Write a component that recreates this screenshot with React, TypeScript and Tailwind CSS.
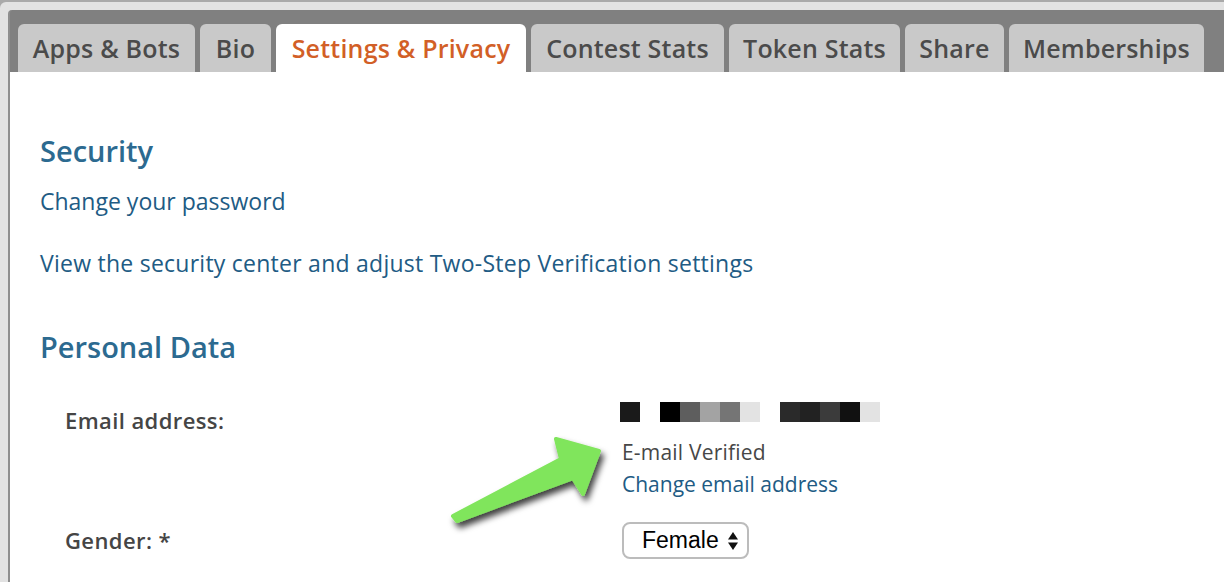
import React from "react"

const tabs = [
    { label: "Apps & Bots", w: "w-[177px]" },
    { label: "Bio", w: "w-[71px]" },
    { label: "Settings & Privacy", w: "w-[250px]", active: true },
    { label: "Contest Stats", w: "w-[193px]" },
    { label: "Token Stats", w: "w-[171px]" },
    { label: "Share", w: "w-[99px]" },
    { label: "Memberships", w: "w-[195px]" },
]

const pixelGroups = [
    ["bg-[#1a1a1a]"],
    ["bg-[#000000]", "bg-[#5e5e5e]", "bg-[#a3a3a3]", "bg-[#757575]", "bg-[#e3e3e3]"],
    ["bg-[#2a2a2a]", "bg-[#222222]", "bg-[#3b3b3b]", "bg-[#111111]", "bg-[#e3e3e3]"],
]

function Arrow() {
    return (
        <svg className="absolute left-0 top-0 pointer-events-none" width="1224" height="582" viewBox="0 0 1224 582">
            <defs>
                <filter id="arrowShadow" x="-20%" y="-20%" width="140%" height="150%">
                    <feDropShadow dx="3" dy="5" stdDeviation="3" floodColor="#000" floodOpacity="0.75" />
                </filter>
            </defs>
            <polygon
                points="453,516 561,459 556,439 599,451 583,494 573,478 457,521"
                fill="#80e55c"
                stroke="#80e55c"
                strokeWidth="4"
                strokeLinejoin="round"
                filter="url(#arrowShadow)"
            />
        </svg>
    )
}

function App() {
    return (
        <div className="relative w-[1224px] h-[582px] overflow-hidden bg-[#a9a9a9] pt-[2px] font-['Open_Sans',sans-serif]">
            <div className="h-full bg-[#e2e2e2] rounded-tl-[6px] pt-[8px] pl-[8px]">
                <div className="h-full flex flex-col rounded-tl-[4px] bg-[#808080] border-l-2 border-[#8e8e8e]">
                    {/* tab bar */}
                    <div className="flex gap-[5px] pt-[14px] pl-[8px]">
                        {tabs.map((t) => (
                            <div
                                key={t.label}
                                className={`${t.w} h-[48px] shrink-0 rounded-t-[6px] flex justify-center text-[25px] leading-[48px] font-semibold tracking-[0.2px] ${t.active ? "bg-white text-[#d25f27]" : "bg-[#c9c9c9] text-[#4b4b4b]"}`}
                            >
                                {t.label}
                            </div>
                        ))}
                    </div>

                    {/* content */}
                    <div className="flex-1 bg-white pl-[30px]">
                        <h2 className="mt-[61px] text-[29px] leading-[36px] font-semibold text-[#2c6a90]">Security</h2>
                        <p className="mt-[17px] text-[23px] leading-[30px] text-[#215b84]">Change your password</p>
                        <p className="mt-[32px] text-[23px] leading-[30px] tracking-[0.25px] text-[#215b84]">View the security center and adjust Two-Step Verification settings</p>

                        <h2 className="mt-[51px] text-[29px] leading-[36px] font-semibold text-[#2c6a90]">Personal Data</h2>

                        <div className="mt-[37px] flex">
                            <div className="w-[582px] pl-[25px] pt-[3px] text-[22px] leading-[30px] font-semibold tracking-[0.4px] text-[#454545]">Email address:</div>
                            <div>
                                <div className="-ml-[2px] flex gap-[20px] h-[20px]">
                                    {pixelGroups.map((g, i) => (
                                        <div key={i} className="flex">
                                            {g.map((c, j) => (
                                                <div key={j} className={`w-[20px] h-[20px] ${c}`} />
                                            ))}
                                        </div>
                                    ))}
                                </div>
                                <p className="mt-[14px] text-[21px] leading-[32px] tracking-[0.2px] text-[#474747]">E-mail Verified</p>
                                <p className="text-[21px] leading-[32px] text-[#215b84]">Change email address</p>
                            </div>
                        </div>

                        <div className="mt-[22px] flex">
                            <div className="w-[582px] pl-[25px] pt-[3px] text-[22px] leading-[30px] font-semibold tracking-[0.4px] text-[#454545]">Gender: *</div>
                            <div className="w-[127px] h-[37px] rounded-[8px] border-2 border-[#bcbcbc] flex items-center justify-between pl-[18px] pr-[8px] font-['Liberation_Sans',Arial,sans-serif] text-[23px] text-black">
                                <span>Female</span>
                                <svg width="12" height="22" viewBox="0 0 12 22">
                                    <polygon points="6,2 11,9.5 1,9.5" fill="#111" />
                                    <polygon points="1,12.5 11,12.5 6,20" fill="#111" />
                                </svg>
                            </div>
                        </div>
                    </div>
                </div>
            </div>
            <Arrow />
        </div>
    )
}
export default App
